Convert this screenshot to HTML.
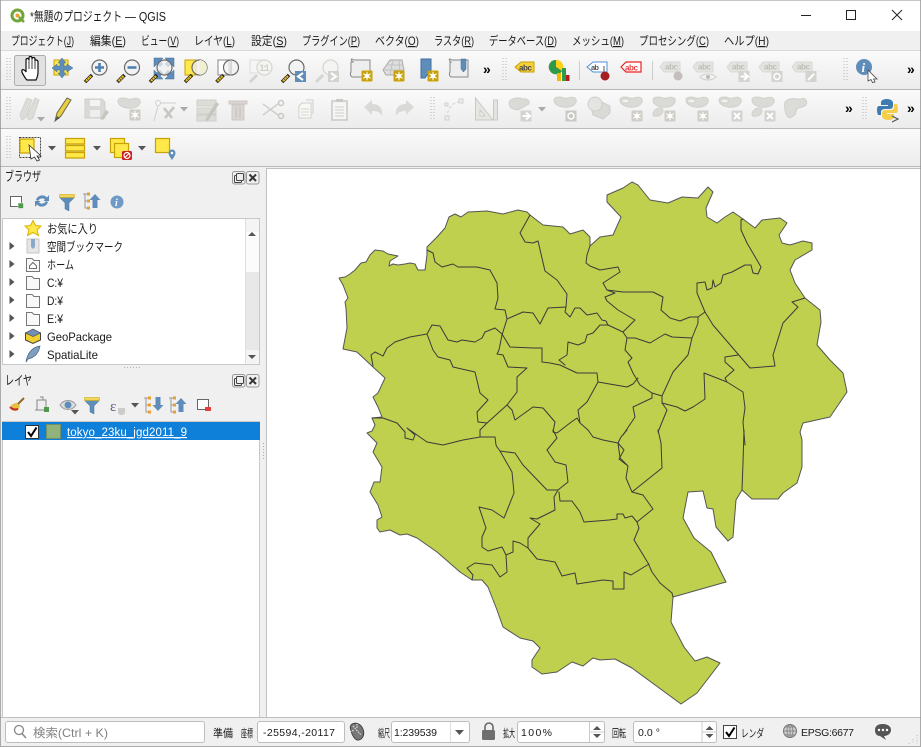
<!DOCTYPE html>
<html lang="ja"><head><meta charset="utf-8"><title>QGIS</title>
<style>
html,body{margin:0;padding:0;background:#f0f0f0;width:921px;height:747px;overflow:hidden}
svg{position:absolute;left:0;top:0;display:block}
text{font-family:"Liberation Sans","Noto Sans CJK JP",sans-serif;font-size:12px;fill:#1a1a1a}
</style></head><body>
<svg width="921" height="747" viewBox="0 0 921 747" xmlns="http://www.w3.org/2000/svg">
<defs>
<linearGradient id="tb" x1="0" y1="0" x2="0" y2="1"><stop offset="0" stop-color="#fafafa"/><stop offset="1" stop-color="#ececec"/></linearGradient>
<symbol id="grip" overflow="visible"><path d="M0-12v24M3-12v24" stroke="#b5b5b5" stroke-width="1" stroke-dasharray="1 2" fill="none"/></symbol>
<symbol id="mag" overflow="visible"><path d="M-4 4-11 11" stroke="#222" stroke-width="3.500"/><path d="M-5 5-10.500 10.500" stroke="#f0c020" stroke-width="2.200" stroke-dasharray="2 .5"/><circle cx="3.500" cy="-3.500" r="7.500" fill="#f2f2f2" fill-opacity=".75" stroke="#6a6a6a" stroke-width="1.200"/></symbol>
<symbol id="gmag" overflow="visible"><path d="M-4 4-11 11" stroke="#d5d5d0" stroke-width="3"/><circle cx="3.500" cy="-3.500" r="7.500" fill="#f4f4f2" stroke="#d5d5d0" stroke-width="1.200"/></symbol>
<symbol id="gear" overflow="visible"><rect x="-5.500" y="-5.500" width="11" height="11" rx="1" fill="#c8a208"/><circle r="2.300" fill="#fff"/><path d="M0-4.200V4.200M-3.700-2.300 3.700 2.300M-3.700 2.300 3.700-2.300" stroke="#fff" stroke-width="1"/></symbol>
<symbol id="ggear" overflow="visible"><rect x="-5.500" y="-5.500" width="11" height="11" rx="1" fill="#cfcdc6"/><circle r="2.300" fill="#fff"/><path d="M0-4.200V4.200M-3.700-2.300 3.700 2.300M-3.700 2.300 3.700-2.300" stroke="#fff" stroke-width="1"/></symbol>
<symbol id="gx" overflow="visible"><rect x="-5.500" y="-5.500" width="11" height="11" rx="1" fill="#d3d3d0"/><path d="M-3-3 3 3M-3 3 3-3" stroke="#fff" stroke-width="2"/></symbol>
<symbol id="gtag" overflow="visible"><path d="M-11-3-7-8H9V2H-7Z" fill="#e3e3e0" stroke="#d8d8d4"/><text x="-6" y="-.5" style="font-size:8px;fill:#bdbdb8;font-weight:bold" textLength="13">abc</text></symbol>
<symbol id="blob" overflow="visible"><path d="M-11-4C-11-7.500-5-7.500-1-6 3-4.500 6-8.500 10-6 13-3 10 1.500 5.500 2.500 1 4-4 3-7 1.500-10 0-11-1.500-11-4Z" fill="#dadbd6" stroke="#d0d1cc"/></symbol>
<symbol id="blobh" overflow="visible"><use href="#blob"/><ellipse cx="-5.500" cy="-3" rx="4" ry="2" fill="#f2f2f0" stroke="#cfd0cb"/></symbol>
<symbol id="blob2" overflow="visible"><use href="#blob"/><path d="M-11 11C-11 6-7 4-3.500 4-1 4 0 7-2.500 10-5 12.500-10 13-11 11Z" fill="#dadbd6" stroke="#d0d1cc"/></symbol>
<symbol id="darr" overflow="visible"><path d="M-4-2H4L0 2.500Z" fill="#555"/></symbol>
<symbol id="garr" overflow="visible"><path d="M-4-2H4L0 2.500Z" fill="#aaa"/></symbol>
<symbol id="yb" overflow="visible"><rect width="14" height="14" fill="#ffe84a" stroke="#c8a200" stroke-width="1.200"/></symbol>
<symbol id="tri" overflow="visible"><path d="M-2.500-4 2.500 0-2.500 4Z" fill="#555"/></symbol>
<symbol id="folder" overflow="visible"><path d="M-6.500-6.500H-1L1-4.500H6.500V6.500H-6.500Z" fill="#f8f8f8" stroke="#777"/></symbol>
<symbol id="funnel" overflow="visible"><path d="M-7-7H7V-4L2 1V9L-2 7V1L-7-4Z" fill="#5f8db9" stroke="#4a7aaa" stroke-width=".5"/><path d="M-7.500-7.500H7.500V-4.500H-7.500Z" fill="#f2d65a" stroke="#c8a200" stroke-width=".5"/></symbol>
<symbol id="treeup" overflow="visible"><path d="M-8-7H-3M-6-7V7H-3M-6 0H-3" stroke="#999" fill="none"/><rect x="-4" y="-8.500" width="3" height="3" fill="#e8a030"/><rect x="-4" y="-1.500" width="3" height="3" fill="#e8a030"/><rect x="-4" y="5.500" width="3" height="3" fill="#e8a030"/></symbol>
<symbol id="win" overflow="visible"><rect x="1" y="3" width="7" height="7" rx="1" fill="none" stroke="#444"/><rect x="3" y="1" width="7" height="7" rx="1" fill="#eee" stroke="#444"/><rect x="-1" y="-1" width="12.500" height="12.500" rx="2" fill="none" stroke="#999"/></symbol>
<symbol id="cls" overflow="visible"><rect x="-1" y="-1" width="12.500" height="12.500" rx="2" fill="none" stroke="#999"/><path d="M2 2 8.500 8.500M2 8.500 8.500 2" stroke="#333" stroke-width="2"/></symbol>
<symbol id="spin" overflow="visible"><path d="M-4-2 0-6 4-2Z" fill="#555"/><path d="M-4 2 0 6 4 2Z" fill="#555"/><path d="M-7 0H7" stroke="#ccc"/><path d="M-7.500-10V10" stroke="#ccc"/></symbol>
</defs>

<!-- window base -->
<rect width="921" height="747" fill="#f0f0f0"/>
<rect width="921" height="31" fill="#fff"/>
<rect y="31" width="921" height="20" fill="#f0f0f0"/>
<rect y="51" width="921" height="38" fill="url(#tb)"/>
<rect y="90" width="921" height="38" fill="url(#tb)"/>
<rect y="129" width="921" height="37" fill="url(#tb)"/>
<path d="M0 50.500H921" stroke="#d8d8d8"/>
<path d="M0 89.500H921M0 128.500H921M0 166.500H921" stroke="#b9b9b9"/>

<!-- title bar -->
<circle cx="17.500" cy="15.500" r="5.500" fill="#fff" stroke="#6fa53a" stroke-width="3"/>
<circle cx="17.500" cy="15.500" r="2" fill="#e8a030"/>
<path d="M19 17 24 22" stroke="#6fa53a" stroke-width="2.500"/>
<text x="30" y="21" style="font-size:13px" textLength="92" lengthAdjust="spacingAndGlyphs">*無題のプロジェクト</text>
<text x="125" y="21" style="font-size:13px" textLength="41" lengthAdjust="spacingAndGlyphs">— QGIS</text>
<path d="M801 15.500H811" stroke="#222"/>
<rect x="846.500" y="10.500" width="9" height="9" fill="none" stroke="#222"/>
<path d="M892 10 902 20M902 10 892 20" stroke="#222"/>

<!-- menu -->
<g>
<text x="11" y="45" textLength="63" lengthAdjust="spacingAndGlyphs">プロジェクト(<tspan text-decoration="underline">J</tspan>)</text>
<text x="90" y="45" textLength="36" lengthAdjust="spacingAndGlyphs">編集(<tspan text-decoration="underline">E</tspan>)</text>
<text x="141" y="45" textLength="38" lengthAdjust="spacingAndGlyphs">ビュー(<tspan text-decoration="underline">V</tspan>)</text>
<text x="194" y="45" textLength="41" lengthAdjust="spacingAndGlyphs">レイヤ(<tspan text-decoration="underline">L</tspan>)</text>
<text x="251" y="45" textLength="36" lengthAdjust="spacingAndGlyphs">設定(<tspan text-decoration="underline">S</tspan>)</text>
<text x="302" y="45" textLength="58" lengthAdjust="spacingAndGlyphs">プラグイン(<tspan text-decoration="underline">P</tspan>)</text>
<text x="375" y="45" textLength="44" lengthAdjust="spacingAndGlyphs">ベクタ(<tspan text-decoration="underline">O</tspan>)</text>
<text x="434" y="45" textLength="40" lengthAdjust="spacingAndGlyphs">ラスタ(<tspan text-decoration="underline">R</tspan>)</text>
<text x="489" y="45" textLength="68" lengthAdjust="spacingAndGlyphs">データベース(<tspan text-decoration="underline">D</tspan>)</text>
<text x="572" y="45" textLength="52" lengthAdjust="spacingAndGlyphs">メッシュ(<tspan text-decoration="underline">M</tspan>)</text>
<text x="639" y="45" textLength="70" lengthAdjust="spacingAndGlyphs">プロセシング(<tspan text-decoration="underline">C</tspan>)</text>
<text x="724" y="45" textLength="45" lengthAdjust="spacingAndGlyphs">ヘルプ(<tspan text-decoration="underline">H</tspan>)</text>
</g>

<!-- toolbar row 1 -->
<use href="#grip" x="7" y="70"/>
<rect x="14.500" y="55.500" width="31" height="30" rx="2" fill="#e2e2e2" stroke="#adadad"/>
<path d="M26 79C24 76 21 72 22 70 23 69 25 70 26 72V60C26 58 29 58 29 60V58C29 56 32 56 32 58V59C32 57 35 57 35 59V61C35 59 38 60 38 62V72C38 76 37 78 36 80H27Z" fill="#fff" stroke="#111" stroke-width="1.200"/>
<path d="M29 60V69M32 59V69M35 60V69" stroke="#111" stroke-width=".8"/>
<rect x="54" y="60" width="14" height="15" fill="#ffe84a" stroke="#c8a200"/>
<path d="M62 58 66 63H64V66H67V64L73 68 67 72V70H64V73H66L62 78 58 73H60V70H57V72L52 68 57 64V66H60V63H58Z" fill="#5f8db9" stroke="#3f6f9f" stroke-width=".5"/>
<use href="#mag" x="96" y="71"/><path d="M95 67.500H104M99.500 63V72" stroke="#4f80b0" stroke-width="2.600"/>
<use href="#mag" x="128.500" y="71"/><path d="M127.500 67.500H136.500" stroke="#4f80b0" stroke-width="2.600"/>
<g><path d="M154 58H163L160 61 163 64 160 67 157 64 154 67ZM174 58V67L171 64 168 67 165 64 168 61 165 58ZM154 79V70L157 73 160 70 163 73 160 76 163 79ZM174 79H165L168 76 165 73 168 70 171 73 174 70Z" fill="#5f8db9" stroke="#3f6f9f" stroke-width=".5"/></g>
<use href="#mag" x="161" y="71"/>
<rect x="185" y="60" width="11" height="15" fill="#ffe84a" stroke="#c8a200"/>
<use href="#mag" x="196" y="71"/><path d="M199.500 60V75A7.500 7.500 0 0 0 199.500 60Z" fill="#f0efd0"/>
<rect x="218" y="60" width="11" height="15" fill="#fff" stroke="#888"/>
<use href="#mag" x="227.500" y="71"/><path d="M231 60V75" stroke="#bbb"/>
<rect x="250" y="60" width="12" height="13" fill="#f5f5f3" stroke="#ddd"/>
<use href="#gmag" x="261" y="71"/><text x="259.500" y="71" style="font-size:9px;font-weight:bold;fill:#cfcfca" textLength="10">1:1</text>
<use href="#mag" x="293" y="71"/><rect x="295" y="71" width="11" height="11" fill="#5f8db9"/><path d="M303 73 298 76.500 303 80" fill="none" stroke="#fff" stroke-width="2"/>
<use href="#gmag" x="327" y="71"/><rect x="328" y="71" width="11" height="11" fill="#d3d3d0"/><path d="M331 73 336 76.500 331 80" fill="none" stroke="#fff" stroke-width="2"/>
<path d="M353 62C350 59 351 58 354 60H370V77H353C350 77 350 73 351 72V62Z" fill="#eee" stroke="#888"/><use href="#gear" x="367" y="76"/>
<path d="M383 70 390 60H402L404 70 401 75H386Z" fill="#ddd" stroke="#aaa"/><path d="M387 65H403M384 70H404M393 60 390 75M399 60 400 75" stroke="#bbb" stroke-width=".7"/><use href="#gear" x="399" y="76"/>
<path d="M421 59H431V78L427 75 425 78H421Z" fill="#5f8db9" stroke="#3f6f9f"/><use href="#gear" x="433" y="76"/>
<path d="M451 62C448 59 449 58 452 60H468V77H452C449 77 449 73 450 72V62Z" fill="#eee" stroke="#888"/><path d="M461 59H466V69L463.500 72 461 69Z" fill="#5f8db9" stroke="#3f6f9f" stroke-width=".5"/>
<text x="483" y="74" style="font-size:14px;font-weight:bold;fill:#000">»</text>
<use href="#grip" x="503" y="70"/>
<path d="M515 67 521 62H534V72H521Z" fill="#f4d03a" stroke="#c8a200"/><text x="519" y="70.500" style="font-size:8px;font-weight:bold;fill:#444" textLength="13">abc</text>
<circle cx="556" cy="67" r="7" fill="#cc2222"/><path d="M556 67V60A7 7 0 0 1 562 71Z" fill="#ffd21a"/><path d="M556 67 562 71A7 7 0 0 1 550 71Z" fill="#2f9a4a"/><path d="M556 67 550 71A7 7 0 0 1 556 60Z" fill="#2f9a4a"/>
<rect x="557" y="73" width="4" height="8" fill="#f1b800"/><rect x="562" y="68" width="4" height="13" fill="#2f9a4a"/><rect x="566" y="75" width="3.500" height="6" fill="#b02020"/>
<path d="M579.500 61V80" stroke="#ccc"/>
<path d="M587 67 593 62H607V72H593Z" fill="#fff" stroke="#4f90d8"/><text x="591" y="70" style="font-size:7.500px;font-weight:bold;fill:#555" textLength="8">ab</text><path d="M604 66V73" stroke="#aaa" stroke-width="2"/><circle cx="605" cy="76" r="4.500" fill="#a51c22"/>
<path d="M621 67 626 62H641V72H626Z" fill="#fff" stroke="#ee2222" stroke-width="1.200"/><text x="625" y="70.500" style="font-size:8px;font-weight:bold;fill:#e84040" textLength="13">abc</text>
<path d="M652.500 61V80" stroke="#ccc"/>
<use href="#gtag" x="671" y="70"/><path d="M677 68V74" stroke="#d8d8d4" stroke-width="2"/><circle cx="678" cy="76" r="4.500" fill="#c4bfbd"/>
<use href="#gtag" x="704" y="70"/><path d="M700 77C704 73 712 73 716 77 712 81 704 81 700 77Z" fill="#f2f2f0" stroke="#cfcfca"/><circle cx="708" cy="77" r="2" fill="#bbb"/>
<use href="#gtag" x="738" y="70"/><rect x="738.500" y="71" width="11" height="11" fill="#d3d3d0"/><path d="M740.500 76.500H747M744 73 748 76.500 744 80" fill="none" stroke="#fff" stroke-width="2"/>
<use href="#gtag" x="770" y="70"/><rect x="771.500" y="71" width="11" height="11" fill="#d3d3d0"/><circle cx="777" cy="76.500" r="3" fill="none" stroke="#fff" stroke-width="1.500"/>
<use href="#gtag" x="803" y="70"/><rect x="805.500" y="71" width="11" height="11" fill="#d3d3d0"/><path d="M808 80 814 74" stroke="#fff" stroke-width="2"/>
<use href="#grip" x="844" y="70"/>
<circle cx="864" cy="67" r="8" fill="#5f8db9"/><text x="861.500" y="72" style="font-size:13px;font-weight:bold;font-style:italic;fill:#fff;font-family:'Liberation Serif',serif">i</text>
<path d="M868 70 877 79 873.500 79 875 82 872.500 82.500 871 79.500 868 81Z" fill="#fff" stroke="#444" stroke-width=".8"/>
<text x="907" y="74" style="font-size:14px;font-weight:bold;fill:#000">»</text>

<!-- toolbar row 2 -->
<use href="#grip" x="7" y="109"/>
<g fill="#dcdcd8" stroke="#d2d2ce"><path d="M20 115 22 120 26 117 32 100 27 98Z"/><path d="M27 117 29 120 33 118 39 100 35 98Z"/></g>
<use href="#garr" x="41" y="119"/>
<path d="M55 121 57 113 67 98 71 100 61 116Z" fill="#e8cf40" stroke="#6b6b50"/><path d="M55 121 57 116 60 118Z" fill="#555"/>
<path d="M85 99H102L105 102V118H85Z" fill="#d9d9d6" stroke="#cfcfca"/><rect x="90" y="100" width="10" height="6" fill="#f4f4f2"/><rect x="90" y="110" width="10" height="7" fill="#eee"/><path d="M100 119 106 110 109 112 103 120Z" fill="#c6c6c0"/>
<use href="#blob" x="129" y="105"/><use href="#ggear" x="135" y="115"/>
<circle cx="158" cy="103" r="2.500" fill="none" stroke="#cfcfca"/><path d="M161 103H176M154 121 158 106" stroke="#cfcfca"/><path d="M164 108 172 118M174 107 165 118" stroke="#c6c6c2" stroke-width="2.600"/>
<use href="#garr" x="184" y="109"/>
<path d="M197 100H216V106H197ZM197 108H216V114H197ZM197 115H216V121H197Z" fill="#dcdcd8" stroke="#cfcfca"/><path d="M205 120 216 102 219 104 208 121Z" fill="#c6c6c0"/>
<path d="M229 101H247V104H229Z M232 105H244V120H232Z" fill="#dad6d3" stroke="#cfc8c4"/><path d="M236 107V118M240 107V118" stroke="#c6bfba"/>
<path d="M263 104 278 115M263 115 278 104" stroke="#cfcfca" stroke-width="1.500"/><circle cx="281" cy="103" r="2.500" fill="none" stroke="#c8c8c4" stroke-width="1.500"/><circle cx="281" cy="116" r="2.500" fill="none" stroke="#c8c8c4" stroke-width="1.500"/>
<path d="M302 103H311V118H299V106Z" fill="#f8f8f6" stroke="#cfcfca"/><path d="M306 100H313V114" fill="none" stroke="#cfcfca"/><path d="M301 109H309M301 112H309M301 115H309" stroke="#d4d4d0"/>
<rect x="332" y="101" width="15" height="19" fill="#f5f5f3" stroke="#c8c8c4" stroke-width="1.500"/><rect x="336" y="99" width="7" height="3" fill="#c8c8c4"/><path d="M335 107H344M335 110H344M335 113H344M335 116H344" stroke="#cfcfca"/>
<path d="M364 107 372 100V104C380 104 383 109 382 116 380 112 377 111 372 111V115Z" fill="#d9d9d6"/>
<path d="M414 107 406 100V104C398 104 395 109 396 116 398 112 401 111 406 111V115Z" fill="#d9d9d6"/>
<use href="#grip" x="431" y="109"/>
<path d="M447 118C447 107 454 102 462 101" fill="none" stroke="#d2d2ce" stroke-dasharray="3 2"/><rect x="445" y="116" width="4" height="4" fill="#eee" stroke="#d0d0cc"/><rect x="445" y="103" width="3" height="3" fill="#eee" stroke="#d0d0cc"/><rect x="459" y="99" width="4" height="4" fill="#eee" stroke="#d0d0cc"/>
<path d="M475.500 98 493 120H475.500Z" fill="#e6e6e2" stroke="#c8c8c4"/><path d="M480 110V116H485Z" fill="#f4f4f2" stroke="#c8c8c4"/><path d="M493.500 100H497.500V120H493.500Z" fill="#e3e3df" stroke="#c8c8c4"/>
<path d="M509 103C510 98 518 97 523 99 526 98 530 100 529 104L518 110C514 109 509 109 509 103Z" fill="#dadbd6" stroke="#d0d1cc"/><rect x="520.500" y="110.500" width="11" height="11" fill="#d3d3d0"/><path d="M522.500 116H529M526 112.500 530 116 526 119.500" fill="none" stroke="#fff" stroke-width="2"/>
<use href="#garr" x="542" y="109"/>
<use href="#blob" x="565" y="104"/><rect x="565.500" y="110.500" width="11" height="11" fill="#c9c9c5"/><circle cx="571" cy="116" r="3" fill="none" stroke="#fff" stroke-width="1.500"/>
<path d="M590 102 600 101 610 106 610 113 603 119 593 115Z" fill="#d9d9d6" stroke="#cfcfca"/><circle cx="595" cy="104" r="7" fill="#e4e4e2" stroke="#cfcfca"/>
<use href="#blobh" x="631" y="104"/><use href="#ggear" x="637" y="116"/>
<use href="#blob2" x="664" y="104"/><use href="#ggear" x="670" y="116"/>
<use href="#blobh" x="697" y="104"/><use href="#ggear" x="703" y="116"/>
<use href="#blobh" x="730" y="104"/><use href="#gx" x="737" y="116"/>
<use href="#blob2" x="763" y="104"/><use href="#gx" x="770" y="116"/>
<path d="M785 102C790 96 798 100 801 99 805 97 808 101 806 105 802 109 796 106 796 112 796 115 790 119 788 117 785 114 784 106 785 102Z" fill="#dbdcd7" stroke="#cfd0cb"/>
<text x="845" y="113" style="font-size:14px;font-weight:bold;fill:#000">»</text>
<use href="#grip" x="863" y="109"/>
<path d="M887 99C882 99 881 101 881 103V105H888V106H879C876 106 877 113 878 115H881V112C881 110 883 109 885 109H890C892 109 893 107 893 106V103C893 101 891 99 887 99Z" fill="#3e7bb0"/>
<path d="M888 120C893 120 894 118 894 116V114H887V113H896C899 113 898 106 897 104H894V107C894 109 892 110 890 110H885C883 110 882 112 882 113V116C882 118 884 120 888 120Z" fill="#f6cf4a"/>
<path d="M892 116 898 119 892 122" fill="none" stroke="#555" stroke-width="1.200"/>
<text x="907" y="113" style="font-size:14px;font-weight:bold;fill:#000">»</text>

<!-- toolbar row 3 -->
<use href="#grip" x="7" y="148"/>
<rect x="19.500" y="137.500" width="21" height="20" fill="none" stroke="#444" stroke-dasharray="2 1"/>
<rect x="20" y="139" width="14" height="14" fill="#ffe84a" stroke="#c8a200" stroke-width="1.200"/>
<path d="M29 145 41 156 37 156 39.500 160 37 161 34.500 157 31 159Z" fill="#fff" stroke="#333" stroke-width=".8"/>
<use href="#darr" x="52" y="148"/>
<path d="M65.500 138.500H84.500V144H65.500ZM65.500 145.500H84.500V151H65.500ZM65.500 152.500H84.500V158H65.500Z" fill="#ffe84a" stroke="#c8a200" stroke-width="1.200"/>
<use href="#darr" x="97" y="148"/>
<use href="#yb" x="110.500" y="138.500"/><use href="#yb" x="114.500" y="143.500"/>
<rect x="122" y="151" width="10" height="9" rx="1.500" fill="#cc2020"/><circle cx="127" cy="155.500" r="3" fill="none" stroke="#fff" stroke-width="1.200"/><path d="M125 157.500 129 153.500" stroke="#fff"/>
<use href="#darr" x="142" y="148"/>
<use href="#yb" x="155.500" y="138.500"/>
<path d="M172 160C170 157 168.500 155 168.500 153A3.500 3.500 0 0 1 175.500 153C175.500 155 174 157 172 160Z" fill="#5f8db9"/><circle cx="172" cy="153" r="1.300" fill="#fff"/>

<!-- left dock -->
<rect x="0" y="167" width="261" height="551" fill="#f0f0f0"/>
<text x="5" y="181" textLength="36" lengthAdjust="spacingAndGlyphs" style="font-size:13px">ブラウザ</text>
<use href="#win" x="233.500" y="172.500"/><use href="#cls" x="247.500" y="172.500"/>
<rect x="10.500" y="196.500" width="11" height="10" fill="#fff" stroke="#666"/><rect x="18" y="203" width="5.500" height="5.500" fill="#4f9a4a" stroke="#fff" stroke-width=".5"/>
<path d="M36 200A6.500 6.500 0 0 1 47 197.500L49 195V201H43.500L45 199.500A4.500 4.500 0 0 0 38 201Z" fill="#5f8db9"/><path d="M48 202A6.500 6.500 0 0 1 37 204.500L35 207V201H40.500L39 202.500A4.500 4.500 0 0 0 46 201Z" fill="#5f8db9"/>
<use href="#funnel" x="67" y="202"/>
<use href="#treeup" x="91" y="201"/><path d="M95 194 100.500 200H97.500V208H92.500V200H89.500Z" fill="#5f8db9"/>
<circle cx="117" cy="202" r="6.500" fill="#6f99c6"/><text x="115" y="206" style="font-size:10px;font-weight:bold;font-style:italic;fill:#fff;font-family:'Liberation Serif',serif">i</text>

<!-- browser tree -->
<rect x="2.500" y="218.500" width="257" height="146" fill="#fff" stroke="#c8c8c8"/>
<rect x="245" y="219" width="14" height="145" fill="#f4f4f4"/>
<path d="M245.500 219V364" stroke="#e0e0e0"/>
<rect x="246" y="232" width="13" height="40" fill="#fbfbfb"/>
<rect x="246" y="272" width="13" height="78" fill="#e8e8e8"/>
<path d="M248 236H256L252 232Z" fill="#555"/><path d="M248 355H256L252 359Z" fill="#555"/>
<path d="M33 220.500 35.500 225.500 41 226 37 230 38.500 235.500 33 232.500 27.500 235.500 29 230 25 226 30.500 225.500Z" fill="#ffe84a" stroke="#d8b500"/>
<text x="47" y="233" textLength="51" lengthAdjust="spacingAndGlyphs">お気に入り</text>
<use href="#tri" x="12" y="246"/><path d="M27 239H39V253H27Z" fill="#e6e6e4" stroke="#c4c4c0"/><path d="M31 239H35V247L33 249 31 247Z" fill="#8aa9c8"/>
<text x="47" y="251" textLength="76" lengthAdjust="spacingAndGlyphs">空間ブックマーク</text>
<use href="#tri" x="12" y="264"/><use href="#folder" x="33" y="265"/><path d="M29.500 266 33 262.500 36.500 266V268.500H29.500Z" fill="#fff" stroke="#444" stroke-width=".8"/>
<text x="47" y="269" textLength="27" lengthAdjust="spacingAndGlyphs">ホーム</text>
<use href="#tri" x="12" y="282"/><use href="#folder" x="33" y="283"/><text x="47" y="287" textLength="16" lengthAdjust="spacingAndGlyphs">C:¥</text>
<use href="#tri" x="12" y="300"/><use href="#folder" x="33" y="301"/><text x="47" y="305" textLength="16" lengthAdjust="spacingAndGlyphs">D:¥</text>
<use href="#tri" x="12" y="318"/><use href="#folder" x="33" y="319"/><text x="47" y="323" textLength="16" lengthAdjust="spacingAndGlyphs">E:¥</text>
<use href="#tri" x="12" y="336"/><path d="M25.500 333 33 330 40.500 333V340L33 343.500 25.500 340Z" fill="#f0cf30" stroke="#444"/><path d="M25.500 333 33 329 40.500 333 33 336.500Z" fill="#6f8fb8" stroke="#444" stroke-width=".6"/>
<text x="47" y="341" textLength="65" lengthAdjust="spacingAndGlyphs">GeoPackage</text>
<use href="#tri" x="12" y="354"/><path d="M26 362C27 354 32 347 40 346 39 353 34 358 28 359Z" fill="#7f9fbe" stroke="#42668a" stroke-width=".7"/>
<text x="47" y="359" textLength="51" lengthAdjust="spacingAndGlyphs">SpatiaLite</text>

<!-- layers dock -->
<path d="M124 367.500H141" stroke="#b0b0b0" stroke-dasharray="1 2"/>
<text x="5" y="385" textLength="27" lengthAdjust="spacingAndGlyphs" style="font-size:13px">レイヤ</text>
<use href="#win" x="233.500" y="375.500"/><use href="#cls" x="247.500" y="375.500"/>
<path d="M10 407C13 403 17 402 19 404 21 406 19 411 15 411 12 411 10 409 10 407Z" fill="#e8c040"/><path d="M10 407C12 409 15 410 18 409" stroke="#c03030" stroke-width="2" fill="none"/><path d="M18 404 24 398" stroke="#8a6a2a" stroke-width="2"/>
<path d="M37 400H46V410H37ZM40 397H43V400M35 410H48" fill="#eee" stroke="#888"/><rect x="44" y="407" width="5" height="5" fill="#4f9a4a"/>
<path d="M60 405C64 399 72 399 76 405 72 411 64 411 60 405Z" fill="#ddd" stroke="#999"/><circle cx="68" cy="405" r="3.500" fill="#5f8db9"/><use href="#darr" x="75" y="412"/>
<use href="#funnel" x="92" y="405"/>
<text x="110" y="411" style="font-size:15px;fill:#6a5a80;font-family:'Liberation Serif',serif">ε</text><path d="M118 408H125V413L123 415H120L118 413Z" fill="#ccc"/>
<use href="#darr" x="135" y="405"/>
<use href="#treeup" x="152" y="405"/><path d="M158 411 163.500 405H160.500V397H155.500V405H152.500Z" fill="#5f8db9"/>
<use href="#treeup" x="177" y="405"/><path d="M181 398 186.500 404H183.500V412H178.500V404H175.500Z" fill="#5f8db9"/>
<rect x="197.500" y="399.500" width="11" height="10" fill="#fff" stroke="#666"/><rect x="205" y="407" width="6" height="4" fill="#e04040"/>

<rect x="2.500" y="421.500" width="257" height="296" fill="#fff" stroke="#c8c8c8"/>
<rect x="2" y="422" width="258" height="18" fill="#0f80d9"/>
<rect x="25.500" y="425.500" width="13" height="13" fill="#fff" stroke="#333"/>
<path d="M28 432 31 436 36.500 427.500" fill="none" stroke="#000" stroke-width="2"/>
<rect x="46.500" y="424.500" width="14" height="14" fill="#8fb37a" stroke="#6f8f66"/>
<text x="67" y="436" textLength="120" style="fill:#fff;font-size:11.500px" text-decoration="underline">tokyo_23ku_jgd2011_9</text>
<path d="M263.500 443V459" stroke="#aaa" stroke-dasharray="1 2"/>

<!-- map canvas -->
<rect x="266.500" y="168.500" width="655" height="549" fill="#fff" stroke="#c0c0c0"/>
<g stroke-linejoin="round" stroke-linecap="round">
<path fill="#bed04e" stroke="#555" stroke-width="1" d="M339 278 345 277 350 274 355 270 361 263 366 262 370 255 375 250 383 251 388 254 398 256 390 261 389 266 393 264 398 265 405 264 410 263 415 264 418 270 425 270 427 255 427 247 437 237 445 228 449 217 455 214 461 217 468 212 487 211 503 214 518 210 527 212 530 215 543 225 563 227 570 234 583 230 590 237 590 246 600 237 613 235 621 217 607 202 607 195 623 188 632 182 638 185 650 200 668 203 682 197 698 198 708 187 713 192 706 208 707 217 717 223 725 217 733 212 743 219 755 228 762 220 780 218 787 223 779 235 782 243 790 245 803 241 812 243 812 250 795 260 790 270 795 283 805 298 820 310 821 322 817 345 830 360 843 373 847 392 830 417 803 423 800 432 802 440 802 467 797 483 783 493 778 499 752 499 742 490 736 500 733 537 728 541 716 527 713 509 707 508 703 491 688 492 683 518 694 538 711 552 726 582 673 597 671 622 684 647 695 661 707 657 720 663 697 693 681 704 632 668 615 659 600 660 593 658 583 666 572 662 557 672 542 674 532 667 532 660 540 648 533 641 520 638 503 627 497 610 488 587 482 580 472 580 460 572 437 552 417 538 407 534 400 535 390 530 380 532 377 528 377 520 382 517 378 505 370 492 374 482 380 482 382 467 373 452 377 443 367 433 372 431 375 425 372 418 382 417 378 407 373 397 378 393 385 378 373 367 357 352 343 349 347 328 346 308 345 302 348 298 343 285Z"/>
<g fill="none" stroke="#3a3a3a" stroke-width="1">
<path d="M427 250 433 253 435 262 442 267 453 264 458 267 477 267 490 270 497 283 498 298 495 309 505 310 507 319"/>
<path d="M530 215 520 233 525 242 533 243 538 241 545 271 557 280 567 294 566 307 548 308 540 324 533 313 523 312 507 319 502 335 499 350 497 354 503 355 508 367 527 368 517 377 517 392 507 405 487 423 480 430 480 437 495 437 496 445 497 447 500 451 512 472 514 493 504 518 492 510 479 507 486 528 482 537 482 547 488 551 502 547 506 555 507 572 500 577 492 565 475 563 467 568 473 575 472 580"/>
<path d="M500 451 515 453 523 465 547 490 558 490 568 482 566 465 555 462 547 450 557 438 553 430"/>
<path d="M558 490 554 497 555 510 537 519 530 518 540 524 528 538 528 548 520 543 513 541 513 552 506 555"/>
<path d="M528 548 537 559 555 562 562 576 575 573 577 584 603 580 613 581 613 589 624 589 624 572 631 575 649 564"/>
<path d="M559 492 560 501 572 501 580 512 584 522 597 521 609 520 617 519 617 514 623 514 625 518 632 516 637 522 639 528 634 540 648 563 652 572 660 583 672 593 673 597"/>
<path d="M637 522 653 509 643 495 632 492 626 478 628 466 619 459 624 450 618 443 621 437 627 430"/>
<path d="M632 492 662 468 661 443 658 430"/>
<path d="M588 430 593 437 603 440 618 443 620 458 627 465"/>
<path d="M744 430 743 463 742 490"/>
<path d="M427 334 410 337 395 342 387 348 383 356 375 352 371 355 373 366"/>
<path d="M427 334 432 325 440 326 448 340 457 342 462 340 475 342 482 338 485 332 495 328 502 334 510 347 533 348 542 348 542 362 550 363 560 365 577 373 597 373 598 382 587 402 578 410 580 423 588 430"/>
<path d="M427 334 433 350 438 357 450 360 453 367 475 372 480 393 488 400 477 412 478 422 487 423"/>
<path d="M566 307 565 312 570 317 575 308 580 308 587 315 597 313 602 320 606 321 608 325 623 332 635 320 618 310 607 301 605 297 615 293 607 290 603 283 620 272 618 267 600 270 590 266 586 263 587 255 590 246"/>
<path d="M608 325 600 325 593 333 587 335 585 342 578 345 568 342 567 355 559 360 565 365"/>
<path d="M607 290 623 292 653 292 663 297 661 310 670 318 680 321 690 317 698 317 705 312"/>
<path d="M698 317 698 323 692 338 688 355 673 372 662 396"/>
<path d="M623 332 627 338 635 338 650 343 665 334 672 337 692 338"/>
<path d="M627 338 625 350 632 358 628 362 633 373 640 385 652 393 662 396"/>
<path d="M598 382 627 387 633 384 638 378"/>
<path d="M652 393 652 398 633 407 635 417 623 435"/>
<path d="M662 396 662 403 667 410 658 432"/>
<path d="M662 403 677 407 685 411 693 407 705 399 704 373 727 382 743 392 745 408 743 422 745 445"/>
<path d="M727 382 725 378 734 370 725 362 725 357 738 355"/>
<path d="M705 312 713 325 750 368 775 366 773 355 783 323 798 307 792 302 805 298"/>
<path d="M705 312 697 293 697 283 705 282 707 290 712 288 713 280 715 287 721 283 723 275 732 272 745 265 751 265 753 273 758 274 761 267 747 243 741 230 741 220 743 219"/>
<path d="M372 418 383 418 397 423 405 432 405 438 413 440 415 435 407 428 427 442 443 445 463 440 480 437"/>
<path d="M507 405 512 410 515 420 533 407 543 408 555 422 553 432 557 433 570 423 577 418 580 423"/>
</g></g>

<!-- status bar -->
<rect x="0" y="718" width="921" height="29" fill="#f0f0f0"/>
<path d="M0 717.500H921" stroke="#c0c0c0"/>
<rect x="5.500" y="721.500" width="199" height="21" rx="2.500" fill="#fff" stroke="#bdbdbd"/>
<circle cx="19" cy="730" r="4.500" fill="none" stroke="#888" stroke-width="1.300"/><path d="M22 733.500 26 738" stroke="#888" stroke-width="1.500"/>
<text x="33" y="737" textLength="75" lengthAdjust="spacingAndGlyphs" style="fill:#808080">検索(Ctrl + K)</text>
<text x="213" y="737" textLength="20" lengthAdjust="spacingAndGlyphs" style="font-size:11px">準備</text>
<text x="241" y="737" textLength="12" lengthAdjust="spacingAndGlyphs" style="font-size:11px">座標</text>
<rect x="257.500" y="721.500" width="87" height="21" rx="2.500" fill="#fff" stroke="#bdbdbd"/>
<text x="263" y="736" textLength="72" style="font-size:10.500px">-25594,-20117</text>
<path d="M352 724C356 722 361 724 363 729 365 734 363 739 359 740 355 741 352 735 351 731 350 728 350 725 352 724Z" fill="#777" stroke="#333" stroke-width=".8"/><path d="M353 726 361 735M357 724V728M350 732 354 730" stroke="#eee" stroke-dasharray="1.500 1"/>
<text x="378" y="737" textLength="12" lengthAdjust="spacingAndGlyphs" style="font-size:11px">縮尺</text>
<rect x="391.500" y="721.500" width="78" height="21" rx="2.500" fill="#fff" stroke="#bdbdbd"/>
<text x="394" y="736" textLength="43" style="font-size:10.500px">1:239539</text>
<path d="M450.500 722V742" stroke="#ddd"/><path d="M455 730H464L459.500 735Z" fill="#555"/>
<path d="M485 730V727A4 4 0 0 1 493 727V730" fill="none" stroke="#666" stroke-width="1.600"/><rect x="482" y="730" width="13" height="10" rx="1.500" fill="#6f6f6f"/>
<text x="503" y="737" textLength="12" lengthAdjust="spacingAndGlyphs" style="font-size:11px">拡大</text>
<rect x="517.500" y="721.500" width="87" height="21" rx="2.500" fill="#fff" stroke="#bdbdbd"/>
<text x="521" y="736" textLength="31" style="font-size:10.500px">100%</text>
<use href="#spin" x="597" y="732"/>
<text x="612" y="737" textLength="14" lengthAdjust="spacingAndGlyphs" style="font-size:11px">回転</text>
<rect x="633.500" y="721.500" width="83" height="21" rx="2.500" fill="#fff" stroke="#bdbdbd"/>
<text x="638" y="736" textLength="22" style="font-size:10.500px">0.0 °</text>
<use href="#spin" x="709.500" y="732"/>
<rect x="723.500" y="725.500" width="13" height="13" fill="#fff" stroke="#444"/>
<path d="M726 732 729 736 734.500 727.500" fill="none" stroke="#000" stroke-width="2"/>
<text x="741" y="737" textLength="23" lengthAdjust="spacingAndGlyphs" style="font-size:11px">レンダ</text>
<circle cx="790" cy="731" r="6.500" fill="#ccc" stroke="#777"/><path d="M783.500 731H796.500M790 724.500V737.500M785 727H795M785 735H795" stroke="#777" stroke-width=".7"/><ellipse cx="790" cy="731" rx="3" ry="6.500" fill="none" stroke="#777" stroke-width=".7"/>
<text x="801" y="736" textLength="53" style="font-size:10.500px">EPSG:6677</text>
<path d="M875 730C875 726 878 724 882.500 724 887 724 891 726 891 730 891 734 887 736 884 736L886 740 880 736C877 736 875 734 875 730Z" fill="#555"/>
<circle cx="879" cy="730" r="1.200" fill="#fff"/><circle cx="883" cy="730" r="1.200" fill="#fff"/><circle cx="887" cy="730" r="1.200" fill="#fff"/>
<path d="M917 735V744M913 739V744M909 743V744" stroke="#bbb" stroke-dasharray="1 1.500"/>

<!-- window edge -->
<path d="M.5 0V747M920.500 0V747M0 746.500H921" stroke="#8c8c8c" stroke-opacity=".7"/>
<path d="M0 .5H921" stroke="#a0a0a0" stroke-opacity=".6"/>
</svg>
</body></html>
